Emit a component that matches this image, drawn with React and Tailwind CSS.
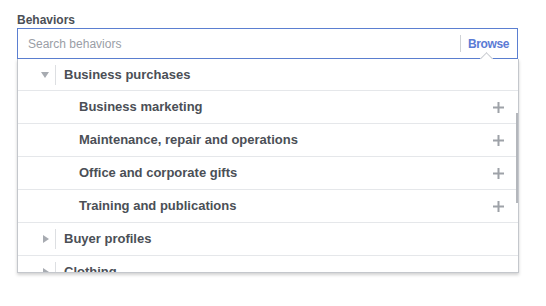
import React from "react";

const Down = () => (
  <svg width="8" height="6" viewBox="0 0 8 6"><path d="M0 0h8L4 6z" fill="#a7abb1" /></svg>
);
const Right = () => (
  <svg width="6" height="8" viewBox="0 0 6 8"><path d="M0 0v8l6-4z" fill="#a7abb1" /></svg>
);
const Plus = () => (
  <svg width="11" height="11" viewBox="0 0 11 11"><path d="M5.5 0v11M0 5.5h11" stroke="#9ea2a8" strokeWidth="2" /></svg>
);

function Parent({ open, label, first }) {
  return (
    <div className={`flex items-center border-b border-[#e5e7ea] ${first ? "h-[32px]" : "h-[33px]"}`}>
      <div className="w-[31px] flex justify-end">{open ? <Down /> : <Right />}</div>
      <div className="ml-[6px] w-px h-[20px] bg-[#dddfe2]" />
      <div className="ml-[8px] text-[13px] font-bold text-[#4b4f56]">{label}</div>
    </div>
  );
}

function Child({ label }) {
  return (
    <div className="flex items-center h-[33px] border-b border-[#e5e7ea] pl-[61px] pr-[14px]">
      <div className="flex-1 text-[13px] font-bold text-[#4b4f56]">{label}</div>
      <Plus />
    </div>
  );
}

export default function App() {
  return (
    <div className="w-[546px] h-[306px] bg-white pl-[17px] pt-[12px]" style={{ fontFamily: '"Liberation Sans", Arial, sans-serif' }}>
      <div className="text-[12px] leading-[16px] font-bold text-[#4b4f56]">Behaviors</div>
      <div className="relative w-[501px]">
        <div className="h-[31px] border border-[#5b7fd1] flex items-center pl-[10px] pr-[8px]">
          <div className="flex-1 text-[12px] text-[#9a9ea6]">Search behaviors</div>
          <div className="w-px h-[17px] bg-[#cfd2d6]" />
          <div className="ml-[7px] text-[12px] font-bold tracking-[-0.4px] text-[#5b7bd5]">Browse</div>
        </div>
        <div className="absolute left-[465px] top-[26px] w-[9px] h-[9px] rotate-45 bg-white border-l border-t border-[#c9ccd1] z-20" />
        <div className="relative h-[214px] w-[502px] overflow-hidden bg-white border-x border-b border-[#c4c7cc] shadow-[0_2px_3px_rgba(0,0,0,0.18)] z-10">
          <Parent open label="Business purchases" first />
          <Child label="Business marketing" />
          <Child label="Maintenance, repair and operations" />
          <Child label="Office and corporate gifts" />
          <Child label="Training and publications" />
          <Parent label="Buyer profiles" />
          <Parent label="Clothing" />
          <div className="absolute right-0 top-[54px] w-[2px] h-[90px] bg-[#b4b7bc]" />
        </div>
      </div>
    </div>
  );
}
